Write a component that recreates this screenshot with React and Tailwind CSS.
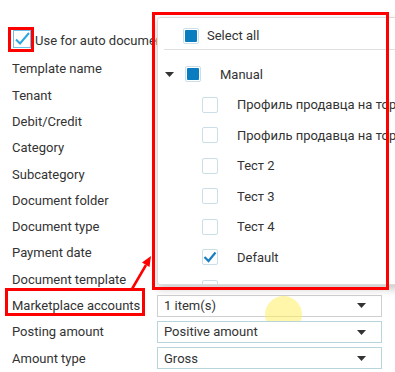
const labels = [
  'Template name',
  'Tenant',
  'Debit/Credit',
  'Category',
  'Subcategory',
  'Document folder',
  'Document type',
  'Payment date',
  'Document template',
]

const treeItems = [
  { label: 'Профиль продавца на торговой площадке', checked: false },
  { label: 'Профиль продавца на торговой площадке 2', checked: false },
  { label: 'Тест 2', checked: false },
  { label: 'Тест 3', checked: false },
  { label: 'Тест 4', checked: false },
  { label: 'Default', checked: true },
  { label: '', checked: false },
]

function Caret() {
  return (
    <svg width="9" height="5" viewBox="0 0 9 5" className="shrink-0">
      <path d="M0 0 L9 0 L4.5 5 Z" fill="#333" />
    </svg>
  )
}

function TreeBox({ state }) {
  // state: 'empty' | 'filled' | 'checked'
  return (
    <div className="w-[16px] h-[16px] shrink-0 border border-[#cadfe8] rounded-[2px] bg-white flex items-center justify-center">
      {state === 'filled' && <div className="w-[12px] h-[12px] bg-[#0a7cc0] rounded-[1px]" />}
      {state === 'checked' && (
        <svg width="14" height="14" viewBox="0 0 14 14">
          <path d="M1.5 7 L5.5 11 L12.5 2.5" fill="none" stroke="#1b7fc1" strokeWidth="2.2" />
        </svg>
      )}
    </div>
  )
}

function SelectBox({ value, hover, raised }) {
  return (
    <div
      className={`w-[225px] h-[22px] flex items-center justify-between pl-[6px] pr-[15px] bg-white border ${
        hover ? 'border-[#cfcfcf]' : 'border-[#b8d4dd]'
      } ${raised ? 'relative z-10' : ''}`}
    >
      <span className="whitespace-nowrap">{value}</span>
      <Caret />
    </div>
  )
}

export default function App() {
  return (
    <div className="relative w-[395px] h-[372px] overflow-hidden bg-white font-['Roboto',sans-serif] text-[13px] text-[#333]">
      {/* Form */}
      <div className="pt-[26px]">
        <div className="h-[30px] flex items-center pl-[13px]">
          <div className="w-[18px] h-[18px] self-start mt-[4px] border border-[#6cc0ec] bg-white flex items-center justify-center shrink-0">
            <svg width="16" height="16" viewBox="0 0 16 16">
              <path d="M2 8.5 L6 12.5 L15 2" fill="none" stroke="#2ba6e4" strokeWidth="2" />
            </svg>
          </div>
          <span className="ml-[4px] w-[122px] overflow-hidden whitespace-nowrap">Use for auto document creation</span>
        </div>

        {labels.map((l) => (
          <div key={l} className="h-[26.3px] flex items-center pl-[12px]">
            <span className="whitespace-nowrap">{l}</span>
          </div>
        ))}

        <div className="h-[26.3px] flex items-center pl-[12px]">
          <span className="w-[145px] whitespace-nowrap">Marketplace accounts</span>
          <SelectBox value="1 item(s)" hover />
        </div>
        <div className="h-[26.3px] flex items-center pl-[12px]">
          <span className="w-[145px] whitespace-nowrap">Posting amount</span>
          <SelectBox value="Positive amount" raised />
        </div>
        <div className="h-[26.3px] flex items-center pl-[12px]">
          <span className="w-[145px] whitespace-nowrap">Amount type</span>
          <SelectBox value="Gross" raised />
        </div>
      </div>

      {/* Cursor highlight */}
      <div className="absolute left-[265px] top-[296px] w-[37px] h-[37px] rounded-full bg-[rgba(255,238,100,0.55)]" />

      {/* Dropdown panel */}
      <div className="absolute left-[157px] top-[17px] w-[260px] h-[268px] bg-white border border-[#dcdcdc] rounded-[3px] shadow-[0_4px_8px_rgba(0,0,0,0.22)] overflow-hidden">
        <div className="h-[31px] flex items-center pl-[25px] pt-[4px]">
          <TreeBox state="filled" />
          <span className="ml-[8px]">Select all</span>
        </div>
        <div className="ml-[6px] border-b border-[#e0e0e0]" />
        <div className="pt-[9px]">
          <div className="h-[30.5px] flex items-center pl-[7px]">
            <Caret />
            <div className="ml-[11px]">
              <TreeBox state="filled" />
            </div>
            <span className="ml-[19px]">Manual</span>
          </div>
          {treeItems.map((it, i) => (
            <div key={i} className="h-[30.5px] flex items-center pl-[44px]">
              <TreeBox state={it.checked ? 'checked' : 'empty'} />
              {it.label && <span className="ml-[19px] whitespace-nowrap">{it.label}</span>}
            </div>
          ))}
        </div>
      </div>

      {/* Annotations */}
      <div className="absolute left-[8px] top-[27px] w-[26px] h-[25px] border-[3px] border-[#ff0000]" />
      <div className="absolute left-[5px] top-[288px] w-[140px] h-[28px] border-[3px] border-[#ff0000]" />
      <div className="absolute left-[152px] top-[12px] w-[237px] h-[278px] border-[3px] border-[#ff0000]" />
      <svg className="absolute left-0 top-0" width="395" height="372">
        <line x1="132" y1="289" x2="146" y2="265" stroke="#ff0000" strokeWidth="2.5" />
        <polygon points="151,256 149.5,267 142,262.5" fill="#ff0000" />
      </svg>
    </div>
  )
}
